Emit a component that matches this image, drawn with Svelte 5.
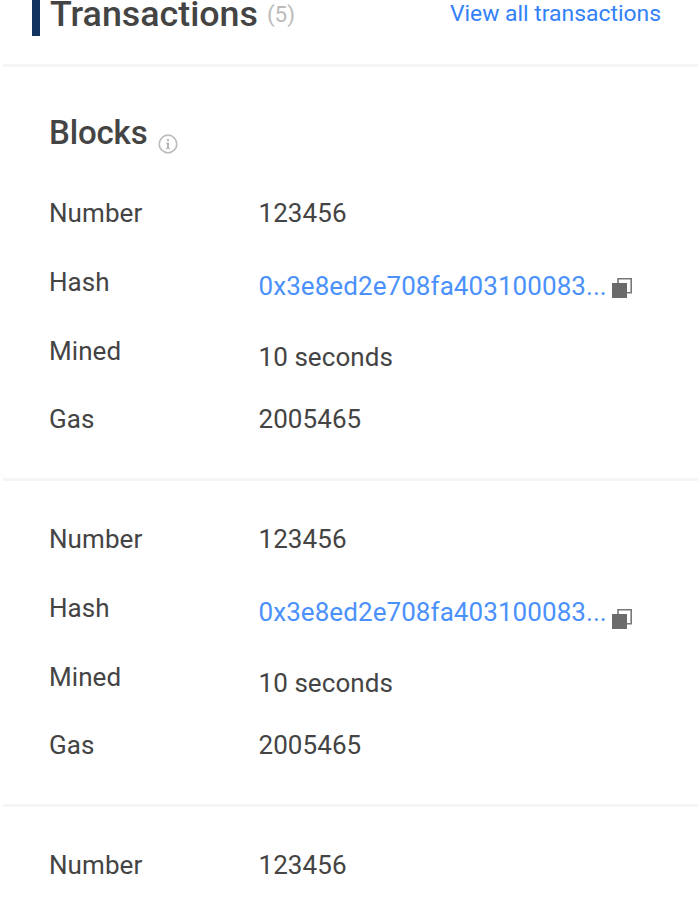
<script>
  const blocks = [
    { number: '123456', hash: '0x3e8ed2e708fa403100083...', mined: '10 seconds', gas: '2005465' },
    { number: '123456', hash: '0x3e8ed2e708fa403100083...', mined: '10 seconds', gas: '2005465', low: true },
    { number: '123456' },
  ];
</script>

<div class="page">
  <header>
    <span class="accent"></span>
    <h2>Transactions</h2>
    <span class="count">(5)</span>
    <a href="#all">View all transactions</a>
  </header>

  <main>
    <div class="title">
      <h2>Blocks</h2>
      <svg class="info" viewBox="0 0 20 20" width="20" height="20">
        <circle cx="10" cy="10" r="8.8" fill="none" stroke="#bdbdbd" stroke-width="1.7" />
        <path d="M9 5h2v2H9zM8 8.5h3V14h1v1H8v-1h1V9.5H8z" fill="#b5b5b5" />
      </svg>
    </div>

    {#each blocks as block}
      <dl>
        <div class="row"><dt>Number</dt><dd>{block.number}</dd></div>
        {#if block.hash}
          <div class="row">
            <dt>Hash</dt>
            <dd class="hash">
              <a href="#hash">{block.hash}</a>
              <svg class="copy" class:low={block.low} viewBox="0 0 22 22" width="22" height="22">
                <path d="M7 6V1.8h13.2v14H16" fill="none" stroke="#777" stroke-width="1.6" />
                <path d="M1 6h15v15H1z" fill="#6b6b6b" />
              </svg>
            </dd>
          </div>
          <div class="row"><dt>Mined</dt><dd class="mined">{block.mined}</dd></div>
          <div class="row"><dt>Gas</dt><dd>{block.gas}</dd></div>
        {/if}
      </dl>
    {/each}
  </main>
</div>

<style>
  :global(body) {
    margin: 0;
    background: #fff;
  }
  .page {
    box-sizing: border-box;
    height: 900px;
    padding: 0 2px 0 3px;
    overflow: hidden;
    font-family: Roboto, sans-serif;
    color: #444;
  }
  header {
    display: flex;
    height: 64px;
    border-bottom: 3px solid #f5f5f5;
    line-height: 28px;
  }
  .accent {
    width: 8px;
    height: 36px;
    margin-left: 29px;
    background: #12335f;
  }
  h2 {
    margin: 0;
    font-weight: 500;
    font-size: 33px;
  }
  header h2 {
    margin-left: 10px;
    font-size: 35.8px;
    line-height: 28px;
  }
  .count {
    margin-left: 9px;
    font-size: 22.5px;
    color: #bbb;
  }
  header a {
    margin-left: auto;
    margin-right: 37px;
    font-size: 22.9px;
    color: #3381f8;
  }
  a {
    text-decoration: none;
  }
  .title {
    display: flex;
    height: 87px;
    padding-left: 46px;
  }
  .title h2 {
    margin-top: 46px;
    line-height: 40px;
    letter-spacing: -0.15px;
  }
  .info {
    margin: 67px 0 0 10.8px;
  }
  dl {
    box-sizing: border-box;
    height: 324px;
    margin: 0;
    padding: 24.4px 0 0 46px;
    font-size: 26px;
    letter-spacing: 0.07px;
  }
  dl + dl {
    height: 325.7px;
    padding-top: 23.2px;
    border-top: 3px solid #f5f5f5;
  }
  .row {
    display: flex;
    height: 68.7px;
    line-height: 70px;
  }
  dt {
    width: 209.5px;
  }
  dd {
    margin: 0;
  }
  .hash {
    display: flex;
    padding-top: 4px;
  }
  .hash a {
    color: #4b91fb;
  }
  .copy {
    margin: 26px 0 0 3.8px;
  }
  .low {
    margin-top: 31px;
  }
  .mined {
    padding-top: 6px;
  }
</style>
